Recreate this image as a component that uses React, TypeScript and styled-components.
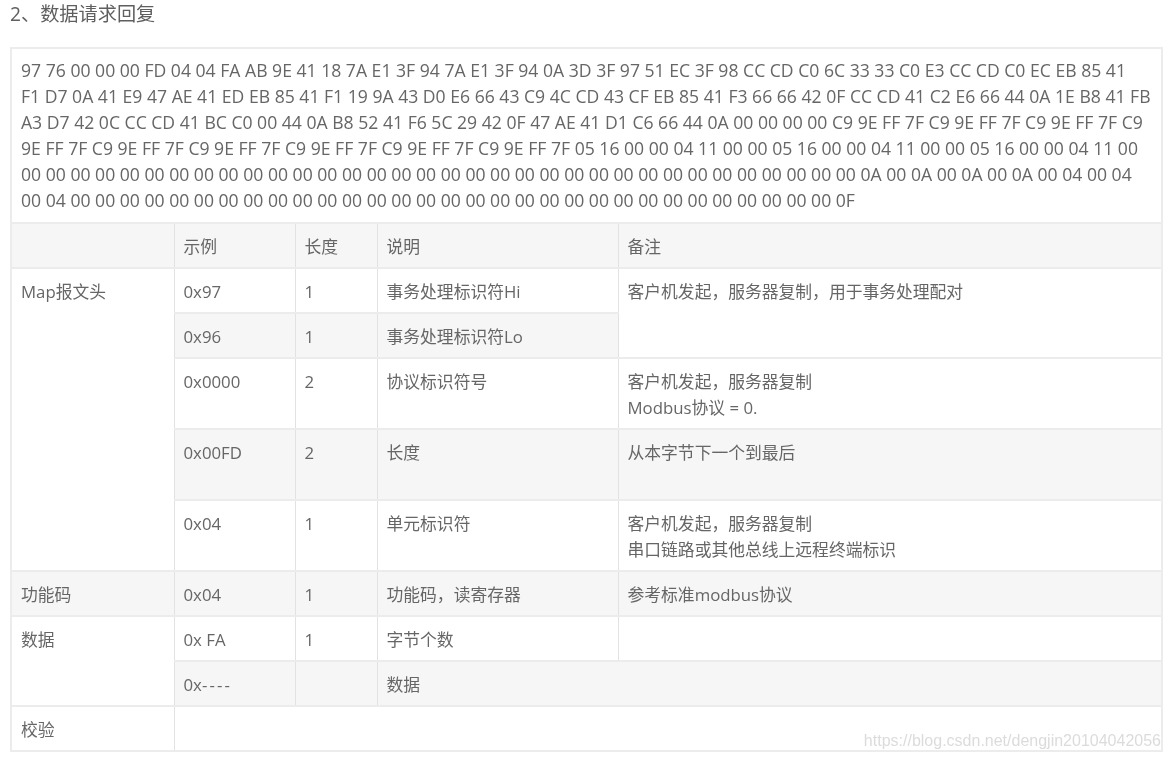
import React from "react";
import styled, { createGlobalStyle } from "styled-components";

const Global = createGlobalStyle`
  html, body { margin: 0; padding: 0; background: #fff; }
  body { font-family: "Open Sans", "Noto Sans CJK SC", sans-serif; color: #666; }
`;

const Page = styled.main`
  position: relative;
  width: 1170px;
  height: 760px;
  overflow: hidden;
  box-sizing: border-box;
  padding: 0 8px 0 10px;
  filter: blur(0.35px);
`;

const Title = styled.h2`
  margin: 0 0 20px;
  height: 27px;
  font-size: 19.2px;
  font-weight: 400;
  line-height: 28px;
  color: #5f5f5f;
`;

const Table = styled.table`
  width: 1151px;
  table-layout: fixed;
  border-collapse: collapse;
  border: 2px solid #ececec;
  font-size: 16.8px;
  line-height: 26px;
`;

const Row = styled.tr<{ $h: number; $shade?: boolean }>`
  height: ${(p) => p.$h}px;
  background: ${(p) => (p.$shade ? "#f6f6f6" : "#fff")};
`;

const Cell = styled.td<{ $white?: boolean }>`
  box-sizing: border-box;
  padding: 10px 9px 7px;
  vertical-align: top;
  border: 1px solid #e2e2e2;
  border-top: 2px solid #ececec;
  background: ${(p) => (p.$white ? "#fff" : "transparent")};
`;

const HexCell = styled(Cell)`
  padding: 8px 9px 7px;
  font-size: 17.6px;
  line-height: 26px;
  color: #666;
  border-top: none;
`;

const HexLine = styled.div`
  white-space: nowrap;
`;

const Note = styled.div`
  white-space: nowrap;
`;

const Dashes = styled.span`
  letter-spacing: 2.1px;
`;

const Watermark = styled.div`
  position: absolute;
  right: 9px;
  top: 730px;
  font-family: "Liberation Sans", sans-serif;
  font-size: 16px;
  line-height: 22px;
  color: rgba(170, 170, 170, 0.42);
`;

const hex = [
  "97 76 00 00 00 FD 04 04 FA AB 9E 41 18 7A E1 3F 94 7A E1 3F 94 0A 3D 3F 97 51 EC 3F 98 CC CD C0 6C 33 33 C0 E3 CC CD C0 EC EB 85 41",
  "F1 D7 0A 41 E9 47 AE 41 ED EB 85 41 F1 19 9A 43 D0 E6 66 43 C9 4C CD 43 CF EB 85 41 F3 66 66 42 0F CC CD 41 C2 E6 66 44 0A 1E B8 41 FB",
  "A3 D7 42 0C CC CD 41 BC C0 00 44 0A B8 52 41 F6 5C 29 42 0F 47 AE 41 D1 C6 66 44 0A 00 00 00 00 C9 9E FF 7F C9 9E FF 7F C9 9E FF 7F C9",
  "9E FF 7F C9 9E FF 7F C9 9E FF 7F C9 9E FF 7F C9 9E FF 7F C9 9E FF 7F 05 16 00 00 04 11 00 00 05 16 00 00 04 11 00 00 05 16 00 00 04 11 00",
  Array(34).fill("00").join(" ") + " 0A 00 0A 00 0A 00 0A 00 04 00 04",
  "00 04 " + Array(31).fill("00").join(" ") + " 0F",
];

export default function App() {
  return (
    <Page>
      <Global />
      <Title>2、数据请求回复</Title>
      <Table>
        <colgroup>
          <col style={{ width: 163 }} />
          <col style={{ width: 121 }} />
          <col style={{ width: 82 }} />
          <col style={{ width: 241 }} />
          <col style={{ width: 544 }} />
        </colgroup>
        <tbody>
          <Row $h={175}>
            <HexCell colSpan={5}>
              {hex.map((l) => (
                <HexLine key={l}>{l}</HexLine>
              ))}
            </HexCell>
          </Row>
          <Row $h={45} $shade>
            <Cell />
            <Cell>示例</Cell>
            <Cell>长度</Cell>
            <Cell>说明</Cell>
            <Cell>备注</Cell>
          </Row>
          <Row $h={45}>
            <Cell rowSpan={5} $white>Map报文头</Cell>
            <Cell>0x97</Cell>
            <Cell>1</Cell>
            <Cell>事务处理标识符Hi</Cell>
            <Cell rowSpan={2} $white>客户机发起，服务器复制，用于事务处理配对</Cell>
          </Row>
          <Row $h={45} $shade>
            <Cell>0x96</Cell>
            <Cell>1</Cell>
            <Cell>事务处理标识符Lo</Cell>
          </Row>
          <Row $h={71}>
            <Cell>0x0000</Cell>
            <Cell>2</Cell>
            <Cell>协议标识符号</Cell>
            <Cell>
              <Note>客户机发起，服务器复制</Note>
              <Note>Modbus协议 = 0.</Note>
            </Cell>
          </Row>
          <Row $h={71} $shade>
            <Cell>0x00FD</Cell>
            <Cell>2</Cell>
            <Cell>长度</Cell>
            <Cell>从本字节下一个到最后</Cell>
          </Row>
          <Row $h={71}>
            <Cell>0x04</Cell>
            <Cell>1</Cell>
            <Cell>单元标识符</Cell>
            <Cell>
              <Note>客户机发起，服务器复制</Note>
              <Note>串口链路或其他总线上远程终端标识</Note>
            </Cell>
          </Row>
          <Row $h={45} $shade>
            <Cell>功能码</Cell>
            <Cell>0x04</Cell>
            <Cell>1</Cell>
            <Cell>功能码，读寄存器</Cell>
            <Cell>参考标准modbus协议</Cell>
          </Row>
          <Row $h={45}>
            <Cell rowSpan={2} $white>数据</Cell>
            <Cell>0x FA</Cell>
            <Cell>1</Cell>
            <Cell>字节个数</Cell>
            <Cell />
          </Row>
          <Row $h={45} $shade>
            <Cell>0x<Dashes>----</Dashes></Cell>
            <Cell />
            <Cell colSpan={2}>数据</Cell>
          </Row>
          <Row $h={45}>
            <Cell>校验</Cell>
            <Cell colSpan={4} />
          </Row>
        </tbody>
      </Table>
      <Watermark>https://blog.csdn.net/dengjin20104042056</Watermark>
    </Page>
  );
}
